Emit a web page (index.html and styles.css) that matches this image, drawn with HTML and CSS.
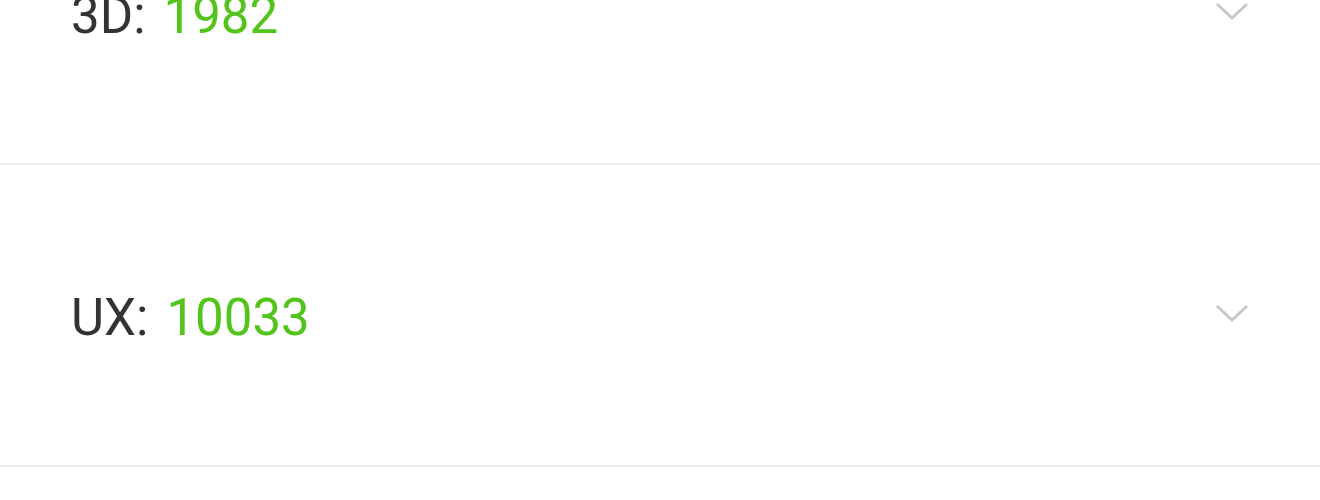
FILE: index.html
```html
<!DOCTYPE html>
<html lang="en">
<head>
  <meta charset="UTF-8" />
  <meta name="viewport" content="width=device-width, initial-scale=1.0"/>
  <title>Tags</title>
  <link rel="stylesheet" href="styles.css">
</head>
<body>
  <div class="list">
    <div class="item">
      <span class="label">3D:<span class="count">1982</span></span>
      <svg class="arrow" width="34" height="18" viewBox="0 0 34 18"><polyline points="2,2 17,16 32,2" /></svg>
    </div>
    <div class="item">
      <span class="label">UX:<span class="count">10033</span></span>
      <svg class="arrow" width="34" height="18" viewBox="0 0 34 18"><polyline points="2,2 17,16 32,2" /></svg>
    </div>
  </div>
</body>
</html>
```

FILE: styles.css
```css
* {
  margin: 0;
  padding: 0;
  box-sizing: border-box;
}
html, body {
  width: 100%;
  height: 100%;
  overflow: hidden;
}
body {
  font-family: Roboto, "Liberation Sans", sans-serif;
  background: #fff;
  color: #333;
}
.list {
  margin-top: -137px;
}
.item {
  height: 302px;
  display: flex;
  align-items: center;
  justify-content: space-between;
  padding: 0 71px;
  border-bottom: 2px solid #ececec;
}
.label {
  font-size: 51px;
  line-height: 1;
  padding-top: 4px;
}
.count {
  color: #52c41a;
  margin-left: 18px;
}
.arrow {
  margin-top: -4px;
}
.arrow polyline {
  fill: none;
  stroke: #c9c9c9;
  stroke-width: 3;
}
```
